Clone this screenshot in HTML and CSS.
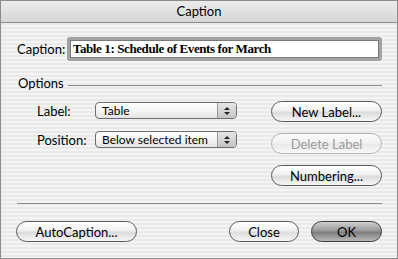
FILE: index.html
```html
<!DOCTYPE html>
<html lang="en">

<head>
    <meta charset="UTF-8">
    <title>Caption</title>
    <link rel="stylesheet" href="styles.css">
</head>

<body>
    <div class="window">
        <div class="titlebar">Caption</div>

        <div class="content">
            <div class="caption-row">
                <label for="caption-input" class="caption-label">Caption:</label>
                <div class="field-ring">
                    <input id="caption-input" class="caption-input" type="text" value="Table 1: Schedule of Events for March">
                </div>
            </div>

            <div class="group-head">
                <span>Options</span>
                <div class="group-line"></div>
            </div>

            <div class="options">
                <div class="option-rows">
                    <div class="option-row">
                        <span class="option-label">Label:</span>
                        <div class="popup">
                            <span class="popup-text">Table</span>
                            <span class="popup-arrows"><span class="up"></span><span class="down"></span></span>
                        </div>
                    </div>
                    <div class="option-row">
                        <span class="option-label">Position:</span>
                        <div class="popup">
                            <span class="popup-text">Below selected item</span>
                            <span class="popup-arrows"><span class="up"></span><span class="down"></span></span>
                        </div>
                    </div>
                </div>

                <div class="side-buttons">
                    <button class="pill">New Label...</button>
                    <button class="pill disabled">Delete Label</button>
                    <button class="pill">Numbering...</button>
                </div>
            </div>

            <hr class="separator">

            <div class="footer">
                <button class="pill autocaption">AutoCaption...</button>
                <div class="footer-right">
                    <button class="pill close-btn">Close</button>
                    <button class="pill default-btn">OK</button>
                </div>
            </div>
        </div>
    </div>
</body>

</html>
```

FILE: styles.css
```css
body {
    margin: 0;
    font-family: "Lucida Grande", Lato, "DejaVu Sans", sans-serif;
    font-size: 13px;
    color: #000;
    background: #fff;
}

.window {
    width: 396px;
    height: 257px;
    border: 1px solid #8c8c8c;
    background: repeating-linear-gradient(#f4f4f4 0 2px, #e9e9e9 2px 4px);
    display: flex;
    flex-direction: column;
}

.titlebar {
    height: 21px;
    line-height: 21px;
    text-align: center;
    background: linear-gradient(#ececec, #d6d6d6);
    border-bottom: 1px solid #8c8c8c;
    font-size: 13px;
}

.content {
    padding: 14px 15px 0 15px;
}

/* caption field */
.caption-row {
    display: flex;
    align-items: center;
}

.caption-label {
    width: 50px;
    padding-left: 1px;
}

.field-ring {
    width: 310px;
    height: 18px;
    border: 3px solid #a3a3a3;
    border-radius: 3px;
    background: #fff;
    box-shadow: inset 0 0 0 1px #7a7a7a;
    display: flex;
}

.caption-input {
    flex: 1;
    border: none;
    background: transparent;
    padding: 0 3px;
    font-family: "Liberation Serif", serif;
    font-weight: 700;
    font-size: 13px;
    letter-spacing: -0.4px;
    outline: none;
}

/* options group */
.group-head {
    display: flex;
    align-items: flex-start;
    margin-top: 15px;
    height: 14px;
    line-height: 14px;
    padding-left: 2px;
}

.group-line {
    flex: 1;
    border-top: 1px solid #8a8a8a;
    margin: 9px 0 0 4px;
}

.options {
    display: flex;
    margin-top: 11px;
}

.option-rows {
    display: flex;
    flex-direction: column;
    gap: 12px;
    padding: 1px 0 0 21px;
}

.option-row {
    display: flex;
    align-items: center;
    height: 17px;
}

.option-label {
    width: 58px;
}

.popup {
    width: 140px;
    height: 15px;
    border: 1px solid #6e6e6e;
    border-radius: 4px;
    background: linear-gradient(#ffffff, #f2f2f2 60%, #e2e2e2);
    display: flex;
    overflow: hidden;
    font-size: 12px;
}

.popup-text {
    flex: 1;
    padding-left: 6px;
    line-height: 15px;
}

.popup-arrows {
    width: 18px;
    border-left: 1px solid #9a9a9a;
    background: linear-gradient(#e6e6e6, #c4c4c4);
    display: flex;
    flex-direction: column;
    align-items: center;
    justify-content: center;
    gap: 2px;
}

.popup-arrows .up {
    border-left: 3px solid transparent;
    border-right: 3px solid transparent;
    border-bottom: 3px solid #222;
}

.popup-arrows .down {
    border-left: 3px solid transparent;
    border-right: 3px solid transparent;
    border-top: 3px solid #222;
}

.side-buttons {
    margin-left: auto;
    display: flex;
    flex-direction: column;
    gap: 11px;
}

/* aqua push buttons */
.pill {
    height: 21px;
    width: 111px;
    padding: 0;
    border: 1px solid #5a5a5a;
    border-radius: 11px;
    background: linear-gradient(#ffffff, #f0f0f0 45%, #dcdcdc 55%, #f6f6f6);
    font-family: inherit;
    font-size: 13px;
    color: #000;
}

.pill.disabled {
    border-color: #b5b5b5;
    color: #9c9c9c;
    background: linear-gradient(#fbfbfb, #f2f2f2 45%, #e9e9e9 55%, #f7f7f7);
}

.separator {
    height: 0;
    border: none;
    border-top: 1px solid #8a8a8a;
    margin: 17px 0 0 1px;
}

.footer {
    display: flex;
    margin-top: 17px;
}

.autocaption {
    width: 121px;
}

.footer-right {
    margin-left: auto;
    display: flex;
    gap: 12px;
}

.close-btn {
    width: 70px;
}

.default-btn {
    width: 71px;
    border-color: #3c3c3c;
    background: linear-gradient(#d0d0d0, #9a9a9a 45%, #7e7e7e 55%, #b8b8b8);
}
```
